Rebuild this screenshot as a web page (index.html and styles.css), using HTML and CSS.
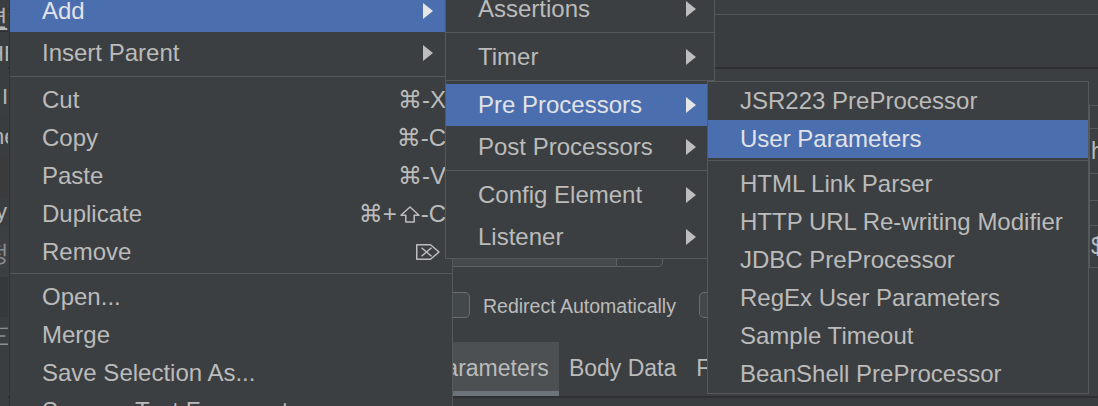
FILE: index.html
```html
<!DOCTYPE html>
<html>
<head>
<meta charset="utf-8">
<link rel="stylesheet" href="styles.css">
</head>
<body>
<div class="app">
  <aside class="sidebar">
    <div class="sb sb1"><span class="kr">편</span></div>
    <div class="sb sb2"><span>HE</span></div>
    <div class="sb sb3"><span>I</span></div>
    <div class="sb sb4"><span>ne</span></div>
    <div class="sb sb5"></div>
    <div class="sb sb6"><span>y|</span></div>
    <div class="sb sb7"><span class="kr">정</span></div>
    <div class="sb sb8"></div>
    <div class="sb sb9"><span>三</span></div>
  </aside>
  <main class="main">
    <div class="hdr1"></div>
    <div class="hdr2"></div>
    <div class="mid">
      <div class="form">
        <div class="fields"><div class="field f1"></div><div class="field f2"></div></div>
        <div class="checks">
          <span class="cb"></span><span class="cb-label">Redirect Automatically</span><span class="cb cb2"></span><span class="cb-label">Use KeepAlive</span>
        </div>
        <div class="tabs">
          <div class="tab sel">Parameters</div>
          <div class="tab">Body Data</div>
          <div class="tab">Files Upload</div>
        </div>
      </div>
      <div class="table-edge">
        <div class="te te1"></div>
        <div class="te te2"></div>
        <div class="te te3"><span>http</span></div>
        <div class="te te4"></div>
        <div class="te te5"></div>
        <div class="te te6"><span>${host}</span></div>
      </div>
    </div>
    <div class="foot"></div>
  </main>
</div>

<div class="menu m1">
  <div class="item sub hl">Add<svg class="arrow" viewBox="0 0 10 16"><path d="M0 0L10 8L0 16Z"/></svg></div>
  <div class="item sub">Insert Parent<svg class="arrow" viewBox="0 0 10 16"><path d="M0 0L10 8L0 16Z"/></svg></div>
  <div class="sep"></div>
  <div class="item">Cut<span class="key">⌘-X</span></div>
  <div class="item">Copy<span class="key">⌘-C</span></div>
  <div class="item">Paste<span class="key">⌘-V</span></div>
  <div class="item">Duplicate<span class="key">⌘+<svg class="shift" viewBox="0 0 20 17"><path d="M10 1L19 9.2H14.2V16H5.8V9.2H1Z" fill="none" stroke="#bdbdbd" stroke-width="1.5" stroke-linejoin="round"/></svg>-C</span></div>
  <div class="item">Remove<svg class="del" viewBox="0 0 24 16"><path d="M0.75 0.75H14.5L23 8L14.5 15.25H0.75Z" fill="none" stroke="#bdbdbd" stroke-width="1.5" stroke-linejoin="round"/><path d="M5.5 3.8L15.5 12.2M15.5 3.8L5.5 12.2" fill="none" stroke="#bdbdbd" stroke-width="1.5"/></svg></div>
  <div class="sep"></div>
  <div class="item">Open...</div>
  <div class="item">Merge</div>
  <div class="item">Save Selection As...</div>
  <div class="item">Save as Test Fragment</div>
  <div class="item">Save Node As Image</div>
</div>

<div class="menu m2">
  <div class="item sub">Assertions<svg class="arrow" viewBox="0 0 10 16"><path d="M0 0L10 8L0 16Z"/></svg></div>
  <div class="sep"></div>
  <div class="item sub">Timer<svg class="arrow" viewBox="0 0 10 16"><path d="M0 0L10 8L0 16Z"/></svg></div>
  <div class="sep"></div>
  <div class="item sub hl">Pre Processors<svg class="arrow" viewBox="0 0 10 16"><path d="M0 0L10 8L0 16Z"/></svg></div>
  <div class="item sub">Post Processors<svg class="arrow" viewBox="0 0 10 16"><path d="M0 0L10 8L0 16Z"/></svg></div>
  <div class="sep"></div>
  <div class="item sub">Config Element<svg class="arrow" viewBox="0 0 10 16"><path d="M0 0L10 8L0 16Z"/></svg></div>
  <div class="item sub">Listener<svg class="arrow" viewBox="0 0 10 16"><path d="M0 0L10 8L0 16Z"/></svg></div>
</div>

<div class="menu m3">
  <div class="item">JSR223 PreProcessor</div>
  <div class="item hl">User Parameters</div>
  <div class="sep"></div>
  <div class="item">HTML Link Parser</div>
  <div class="item">HTTP URL Re-writing Modifier</div>
  <div class="item">JDBC PreProcessor</div>
  <div class="item">RegEx User Parameters</div>
  <div class="item">Sample Timeout</div>
  <div class="item">BeanShell PreProcessor</div>
</div>
</body>
</html>
```

FILE: styles.css
```css
* { box-sizing: border-box; }
html, body { margin: 0; padding: 0; }
body {
  width: 1098px;
  height: 406px;
  overflow: hidden;
  position: relative;
  background: #3c3f41;
  color: #bbbbbb;
  font-family: "Liberation Sans", "DejaVu Sans", Arial, sans-serif;
}

/* ---------- background application ---------- */
.app { display: flex; height: 406px; }

.sidebar {
  width: 8px;
  flex: none;
  overflow: hidden;
  display: flex;
  flex-direction: column;
  background: #3b3e40;
  white-space: nowrap;
  font-size: 22px;
  color: #b5b5b5;
}
.sb { overflow: hidden; display: flex; align-items: center; flex: none; }
.sb span { flex: none; }
.kr { font-family: "Noto Sans CJK KR", sans-serif; }
.sb1 { height: 32px; border-bottom: 1px solid #2e3032; }
.sb1 span { margin-left: -13px; text-decoration: underline; }
.sb2 { height: 44px; }
.sb2 span { margin-left: -12px; }
.sb3 { height: 41px; }
.sb3 span { margin-left: 2px; }
.sb4 { height: 40px; background: #3a3d3f; }
.sb4 span { margin-left: -8px; }
.sb5 { height: 40px; background: #393b3d; }
.sb6 { height: 30px; }
.sb6 span { margin-left: -4px; }
.sb7 { height: 50px; background: #3d4042; color: #8a8d90; }
.sb7 span { margin-left: -12px; }
.sb8 { height: 40px; background: #36393b; }
.sb9 { height: 40px; color: #8a8d90; }
.sb9 span { margin-left: -12px; }

.main { flex: 1; min-width: 0; display: flex; flex-direction: column; }
.hdr1 { height: 15px; border-bottom: 1px solid #54585a; flex: none; }
.hdr2 { height: 54px; background: #3a3d3f; border-bottom: 2px solid #2d2f31; flex: none; }

.mid { height: 329px; flex: none; display: flex; border-bottom: 2px solid #2e3032; }
.form { flex: 1; min-width: 0; display: flex; flex-direction: column; }

.fields { display: flex; height: 36px; margin: 162px 0 0 432px; }
.field { height: 36px; border: 1px solid #5d6164; }
.f1 { width: 177px; background: #45494a; border-radius: 4px 0 0 4px; }
.f2 { width: 46px; background: #3c3f41; border-left: none; border-radius: 0 5px 5px 0; }

.checks {
  display: flex;
  align-items: center;
  height: 26px;
  width: 280px;
  overflow: hidden;
  margin: 25px 0 0 436px;
  font-size: 19.5px;
  white-space: nowrap;
}
.cb {
  width: 26px;
  height: 26px;
  flex: none;
  border: 1px solid #6b6e70;
  border-radius: 5px;
  background: #43494a;
}
.cb-label { margin-left: 13px; padding-top: 2px; flex: none; }
.cb2 { margin-left: 23px; }

.tabs {
  display: flex;
  height: 54px;
  width: 296px;
  overflow: hidden;
  margin: 24px 0 0 412px;
  font-size: 23px;
  white-space: nowrap;
}
.tab {
  flex: none;
  display: flex;
  align-items: center;
  padding: 3px 10px 0;
  border-bottom: 5px solid transparent;
}
.tab.sel { background: #4c5053; border-bottom-color: #6c737a; }

.table-edge {
  width: 9px;
  flex: none;
  overflow: hidden;
  display: flex;
  flex-direction: column;
  font-size: 23px;
  white-space: nowrap;
}
.te { flex: none; border-bottom: 1px solid #55595b; display: flex; align-items: center; padding-left: 1px; }
.te1 { height: 37px; }
.te2 { height: 23px; border-left: 1px solid #55595b; }
.te3 { height: 45px; border-left: 1px solid #55595b; }
.te4 { height: 27px; border-left: 1px solid #55595b; }
.te5 { height: 25px; border-left: 1px solid #55595b; }
.te6 { height: 42px; border-left: 1px solid #55595b; }

.foot { flex: 1; background: #3a3d3f; }

/* ---------- popup menus ---------- */
.menu {
  position: absolute;
  background: #3c3f41;
  border: 1px solid #55595c;
  font-size: 24px;
  color: #bbbbbb;
  white-space: nowrap;
}
.m1 { left: 9px; top: -11px; width: 444px; z-index: 1; border-left-color: #303234; }
.m2 { left: 445px; top: -13px; width: 270px; z-index: 2; }
.m3 { left: 707px; top: 81px; width: 382px; z-index: 3; }

.item { height: 38px; display: flex; align-items: center; padding-left: 32px; }
.item.sub { height: 42px; }
.item.hl { background: #4b6eaf; color: #e1e3e7; }

.sep { height: 1px; background: #55595c; margin: 2px 0 4px; }
.m2 .sep { margin: 2px 0 3px; }

.arrow { flex: none; width: 10px; height: 16px; margin-left: auto; margin-right: 19px; fill: #bdbdbd; }
.m2 .arrow { margin-right: 18px; }
.hl .arrow { fill: #e6e6e6; }

.key { margin-left: auto; padding-right: 6px; display: flex; align-items: center; }
.shift { flex: none; width: 20px; height: 17px; margin: 0 1px 0 3px; }
.del { flex: none; width: 24px; height: 16px; margin-left: auto; margin-right: 12px; }
```
